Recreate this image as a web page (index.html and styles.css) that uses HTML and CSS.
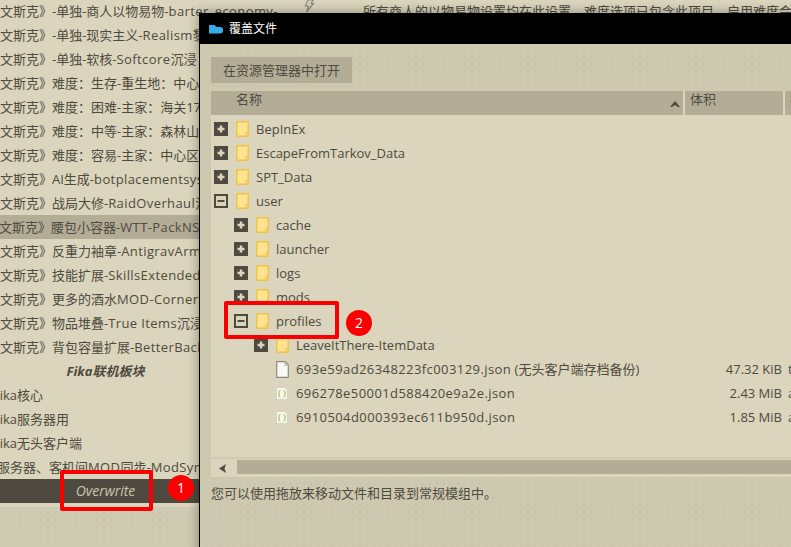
FILE: index.html
```html
<!DOCTYPE html>
<html lang="zh">
<head>
<meta charset="utf-8">
<title>覆盖文件</title>
<link rel="stylesheet" href="styles.css">
</head>
<body>
<svg class="defs" width="0" height="0" aria-hidden="true">
  <symbol id="folder" viewBox="0 0 13 16">
    <path d="M1.500 .8H11.200Q12.200 .8 12.200 1.800V15.200H1.800Q.8 15.200 .8 14.200V1.500Q.8 .8 1.500 .8Z" fill="#ffe391" stroke="#eec445" stroke-width="1.400"/>
    <path d="M10 15V11.500H12" fill="none" stroke="#eec445" stroke-width="1"/>
  </symbol>
  <symbol id="plus" viewBox="0 0 14 14">
    <rect width="14" height="14" fill="#4f4a3f"/>
    <path d="M3.500 7h7M7 3.500v7" stroke="#dad5bc" stroke-width="2.400"/>
  </symbol>
  <symbol id="minus" viewBox="0 0 14 14">
    <rect x="1" y="1" width="12" height="12" fill="#dad5bc" stroke="#4f4a3f" stroke-width="2"/>
    <path d="M3.500 7h7" stroke="#4f4a3f" stroke-width="2"/>
  </symbol>
  <symbol id="json" viewBox="0 0 12 13">
    <path d="M.5.5H9L11.500 3V12.500H.5Z" fill="#f6f5ee" stroke="#d5d2c4"/>
    <path d="M4.500 3.500Q3 3.500 3 5V8.500Q3 10 4.500 10M7.500 3.500Q9 3.500 9 5V8.500Q9 10 7.500 10" fill="none" stroke="#b5bd5a" stroke-width="1.200"/>
  </symbol>
  <symbol id="doc" viewBox="0 0 13 17">
    <path d="M.7.7H9L12.300 4V16.300H.7Z" fill="#f8f8f4" stroke="#8d897c" stroke-width="1.200"/>
    <path d="M8.800.7V4.200H12.300" fill="none" stroke="#b8b5a8"/>
  </symbol>
</svg>

<main class="app">
  <ul class="mods">
    <li class="mod">
      <span class="mod-name">文斯克》-单独-商人以物易物-<span class="lat">barter_economy-</span></span>
      <svg class="bolt" width="12" height="14" viewBox="0 0 12 14"><path d="M5 .8H10.500L8 4.500H10.500L3.500 13 5.500 7H2.500Z" fill="#dad5bc" stroke="#8d897c" stroke-width="1.200"/></svg>
      <span class="mod-note">所有商人的以物易物设置均在此设置，难度选项已包含此项目，启用难度会覆盖</span>
    </li>
    <li class="mod"><span class="mod-name">文斯克》-单独-现实主义-<span class="lat">Realism</span>黎明版</span></li>
    <li class="mod"><span class="mod-name">文斯克》-单独-软核-<span class="lat">Softcore</span>沉浸</span></li>
    <li class="mod"><span class="mod-name">文斯克》难度：生存-重生地：中心区</span></li>
    <li class="mod"><span class="mod-name">文斯克》难度：困难-主家：海关17</span></li>
    <li class="mod"><span class="mod-name">文斯克》难度：中等-主家：森林山</span></li>
    <li class="mod"><span class="mod-name">文斯克》难度：容易-主家：中心区</span></li>
    <li class="mod"><span class="mod-name">文斯克》AI生成-<span class="lat">botplacementsystem</span></span></li>
    <li class="mod"><span class="mod-name">文斯克》战局大修-<span class="lat">RaidOverhaul</span>沉浸</span></li>
    <li class="mod is-selected"><span class="mod-name">文斯克》腰包小容器-<span class="lat">WTT-PackNStrap</span></span></li>
    <li class="mod"><span class="mod-name">文斯克》反重力袖章-<span class="lat">AntigravArmband</span></span></li>
    <li class="mod"><span class="mod-name">文斯克》技能扩展-<span class="lat">SkillsExtended</span>沉浸</span></li>
    <li class="mod"><span class="mod-name">文斯克》更多的酒水<span class="lat">MOD-CornerStore</span></span></li>
    <li class="mod"><span class="mod-name">文斯克》物品堆叠-<span class="lat">True Items</span>沉浸</span></li>
    <li class="mod"><span class="mod-name">文斯克》背包容量扩展-<span class="lat">BetterBackpacks</span></span></li>
    <li class="mod mod-heading"><span>Fika联机板块</span></li>
    <li class="mod"><span class="mod-name clip-f">Fika核心</span></li>
    <li class="mod"><span class="mod-name clip-f">Fika服务器用</span></li>
    <li class="mod"><span class="mod-name clip-f">Fika无头客户端</span></li>
    <li class="mod"><span class="mod-name clip-s">服务器、客机间<span class="lat">MOD</span>同步-<span class="lat">ModSync</span></span></li>
    <li class="mod mod-overwrite"><span>Overwrite</span></li>
  </ul>
  <div class="app-foot"></div>
</main>

<section class="dialog">
  <header class="titlebar">
    <svg class="logo" width="14" height="9" viewBox="0 0 14 9"><path d="M0 0H5.500L7.500 2H11A3 3 0 0 1 11 8.500H0Z" fill="#35ade6"/></svg>
    <span>覆盖文件</span>
  </header>
  <div class="dialog-body">
    <button class="open-btn" type="button">在资源管理器中打开</button>
    <div class="tree">
      <div class="tree-head">
        <div class="col col-name">名称<svg class="sort" width="10" height="6" viewBox="0 0 10 6"><path d="M0 6 5 0 10 6 8 6 5 4 2 6Z" fill="#4f4a3f"/></svg></div>
        <div class="col col-size">体积</div>
        <div class="col col-type">类型</div>
      </div>
      <div class="tree-rows">
        <div class="row"><svg class="exp"><use href="#plus"/></svg><svg class="folder"><use href="#folder"/></svg><span>BepInEx</span></div>
        <div class="row"><svg class="exp"><use href="#plus"/></svg><svg class="folder"><use href="#folder"/></svg><span>EscapeFromTarkov_Data</span></div>
        <div class="row"><svg class="exp"><use href="#plus"/></svg><svg class="folder"><use href="#folder"/></svg><span>SPT_Data</span></div>
        <div class="row"><svg class="exp"><use href="#minus"/></svg><svg class="folder"><use href="#folder"/></svg><span>user</span></div>
        <div class="row lvl1"><svg class="exp"><use href="#plus"/></svg><svg class="folder"><use href="#folder"/></svg><span>cache</span></div>
        <div class="row lvl1"><svg class="exp"><use href="#plus"/></svg><svg class="folder"><use href="#folder"/></svg><span>launcher</span></div>
        <div class="row lvl1"><svg class="exp"><use href="#plus"/></svg><svg class="folder"><use href="#folder"/></svg><span>logs</span></div>
        <div class="row lvl1"><svg class="exp"><use href="#plus"/></svg><svg class="folder"><use href="#folder"/></svg><span>mods</span></div>
        <div class="row lvl1"><svg class="exp"><use href="#minus"/></svg><svg class="folder"><use href="#folder"/></svg><span>profiles</span></div>
        <div class="row lvl2"><svg class="exp"><use href="#plus"/></svg><svg class="folder"><use href="#folder"/></svg><span>LeaveItThere-ItemData</span></div>
        <div class="row lvl3"><svg class="file-doc"><use href="#doc"/></svg><span class="fname"><span class="hash">693e59ad26348223fc003129.json</span> (无头客户端存档备份)</span><span class="size">47.32 KiB</span><span class="type">tmp</span></div>
        <div class="row lvl3"><svg class="file-json"><use href="#json"/></svg><span class="fname"><span class="hash">696278e50001d588420e9a2e.json</span></span><span class="size">2.43 MiB</span><span class="type">app</span></div>
        <div class="row lvl3"><svg class="file-json"><use href="#json"/></svg><span class="fname"><span class="hash">6910504d000393ec611b950d.json</span></span><span class="size">1.85 MiB</span><span class="type">app</span></div>
      </div>
      <div class="hscroll">
        <div class="hscroll-btn"><svg width="7" height="9" viewBox="0 0 7 9"><path d="M7 0 0 4.500 7 9 5.500 4.500Z" fill="#4f4a3f"/></svg></div>
        <div class="hscroll-thumb"></div>
      </div>
    </div>
    <p class="hint">您可以使用拖放来移动文件和目录到常规模组中。</p>
  </div>
</section>

<div class="mark mark-overwrite"></div>
<div class="badge badge-1">1</div>
<div class="mark mark-profiles"></div>
<div class="badge badge-2">2</div>
</body>
</html>
```

FILE: styles.css
```css
html, body {
  margin: 0;
  height: 100%;
  overflow: hidden;
}
body {
  position: relative;
  width: 791px;
  height: 547px;
  background: #dad5bc;
  color: #4f4a3f;
  font: 13px/24px "Open Sans", "Noto Sans CJK SC", sans-serif;
}
.defs { position: absolute; }
.app {
  display: flex;
  flex-direction: column;
  height: 100%;
}
.mods {
  list-style: none;
  margin: -1px 0 0;
  padding: 0;
}
.mod {
  display: flex;
  align-items: center;
  height: 24px;
  white-space: nowrap;
  overflow: hidden;
}
.mod-name { width: 303px; flex: none; overflow: hidden; }
.lat { letter-spacing: .4px; }
.bolt { flex: none; margin-top: -11px; }
.mod-note { margin-left: 48px; }
.clip-f { margin-left: -7px; }
.clip-s { margin-left: -3px; }
.is-selected { background: #b3ad98; }
.is-selected .mod-name { text-indent: -1px; }
.mod-heading {
  width: 211px;
  justify-content: center;
  font-weight: 700;
  font-style: italic;
}
.mod-overwrite {
  justify-content: center;
  width: 211px;
  background: #4f4a3f;
  color: #c9c4ab;
  font-size: 14px;
  font-style: italic;
}
.app-foot {
  flex: 1;
  margin-top: 4px;
  background-color: #c9c4ab;
  background-image:
    linear-gradient(90deg, #cfcab2 0 5px, transparent 5px),
    linear-gradient(#cfcab2 0 5px, transparent 5px);
  background-size: 7px 7px;
}
.dialog {
  position: absolute;
  left: 199px;
  top: 13px;
  width: 650px;
  height: 560px;
  display: flex;
  flex-direction: column;
  border: 1px solid #000;
  box-sizing: border-box;
  box-shadow: 0 0 11px rgba(0, 0, 0, .38);
}
.titlebar {
  display: flex;
  align-items: center;
  flex: none;
  height: 30px;
  background: #000;
  color: #fff;
  font-size: 12px;
  padding-left: 9px;
  gap: 6px;
}
.logo { flex: none; }
.dialog-body {
  flex: 1;
  padding: 13px 0 0 11px;
  background-color: #c7c2a9;
  background-image:
    linear-gradient(90deg, #cdc8b0 0 5px, transparent 5px),
    linear-gradient(#cdc8b0 0 5px, transparent 5px);
  background-size: 7px 7px;
}
.open-btn {
  display: block;
  width: 141px;
  height: 26px;
  padding: 0;
  border: 0;
  background: #b3ad98;
  color: #4f4a3f;
  font: inherit;
  line-height: 26px;
}
.tree { margin-top: 8px; }
.tree-head {
  display: flex;
  gap: 2px;
  height: 25px;
  background: #dad5bc;
}
.col {
  position: relative;
  flex: none;
  height: 24px;
  background: #b3ad98;
  line-height: 17px;
}
.col-name { width: 472px; padding-left: 25px; box-sizing: border-box; }
.col-size { width: 98px; padding-left: 5px; box-sizing: border-box; }
.col-type { width: 80px; padding-left: 5px; box-sizing: border-box; }
.sort { position: absolute; right: 3px; top: 10px; }
.tree-rows {
  height: 343px;
  padding-top: 1px;
  box-sizing: border-box;
  background: #dad5bc;
  border-bottom: 2px solid #d0cbb2;
}
.row {
  display: flex;
  align-items: center;
  height: 24px;
  padding-left: 3px;
  white-space: nowrap;
}
.lvl1 { padding-left: 23px; }
.lvl2 { padding-left: 43px; }
.lvl3 { padding-left: 65px; }
.exp { flex: none; width: 14px; height: 14px; margin-right: 8px; }
.folder { flex: none; width: 13px; height: 16px; margin-right: 7px; }
.file-doc { flex: none; width: 13px; height: 17px; margin-right: 7px; }
.file-json { flex: none; width: 12px; height: 13px; margin-right: 8px; }
.fname { width: 395px; flex: none; }
.hash { letter-spacing: .42px; }
.size { width: 91px; flex: none; text-align: right; }
.type { margin-left: 6px; }
.hscroll {
  display: flex;
  gap: 3px;
  height: 18px;
  background: #dad5bc;
  align-items: flex-start;
}
.hscroll-btn {
  display: flex;
  align-items: center;
  justify-content: center;
  flex: none;
  width: 23px;
  height: 18px;
}
.hscroll-thumb {
  flex: 1;
  height: 14px;
  margin-top: 1px;
  background: #b3ad98;
}
.hint {
  margin: 4px 0 0;
}
.mark {
  position: absolute;
  box-sizing: border-box;
  border: 4px solid #fb0000;
  border-radius: 2px;
}
.mark-overwrite { left: 60px; top: 470px; width: 93px; height: 41px; }
.mark-profiles { left: 224px; top: 301px; width: 115px; height: 38px; }
.badge {
  position: absolute;
  width: 26px;
  height: 26px;
  border-radius: 50%;
  background: #fb0000;
  color: #fff;
  text-align: center;
  line-height: 26px;
  font-size: 14px;
}
.badge-1 { left: 168px; top: 475px; }
.badge-2 { left: 346px; top: 310px; }
```
